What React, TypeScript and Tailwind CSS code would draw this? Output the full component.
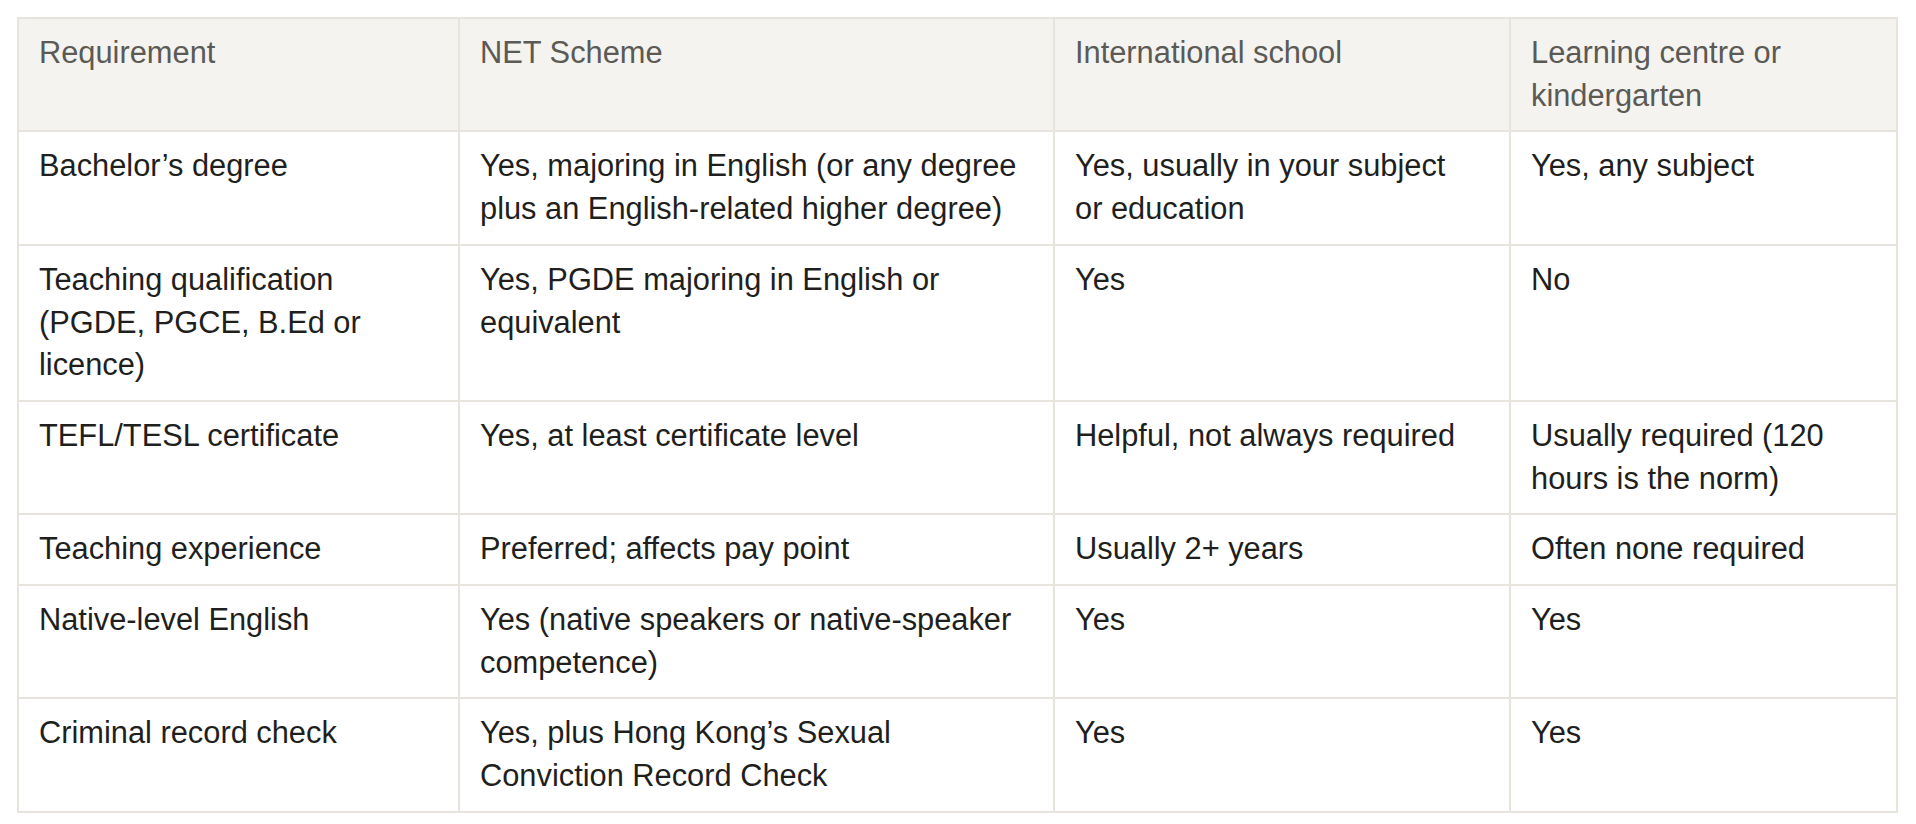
const rows: [string, string, string, string][] = [
  [
    "Bachelor’s degree",
    "Yes, majoring in English (or any degree plus an English-related higher degree)",
    "Yes, usually in your subject or education",
    "Yes, any subject",
  ],
  [
    "Teaching qualification (PGDE, PGCE, B.Ed or licence)",
    "Yes, PGDE majoring in English or equivalent",
    "Yes",
    "No",
  ],
  [
    "TEFL/TESL certificate",
    "Yes, at least certificate level",
    "Helpful, not always required",
    "Usually required (120 hours is the norm)",
  ],
  ["Teaching experience", "Preferred; affects pay point", "Usually 2+ years", "Often none required"],
  ["Native-level English", "Yes (native speakers or native-speaker competence)", "Yes", "Yes"],
  [
    "Criminal record check",
    "Yes, plus Hong Kong’s Sexual Conviction Record Check",
    "Yes",
    "Yes",
  ],
];

const headers = ["Requirement", "NET Scheme", "International school", "Learning centre or kindergarten"];

const pad = ["pr-[20px]", "pr-[20px]", "pr-[40px]", "pr-[20px]"];

export default function App() {
  return (
    <div className="bg-white pt-[17px] pb-[10px] pl-[17px] pr-[18px] font-['Liberation_Sans',Arial,sans-serif]">
      <table className="w-full table-fixed border-collapse border-2 border-[#e6e4dc] text-[30.8px] leading-[42.7px]">
        <colgroup>
          <col className="w-[441px]" />
          <col className="w-[595px]" />
          <col className="w-[456px]" />
          <col />
        </colgroup>
        <thead>
          <tr className="bg-[#f4f3ef]">
            {headers.map((h, i) => (
              <th
                key={h}
                className={`border-2 border-[#e6e4dc] pl-[20px] ${pad[i]} py-[13px] text-left align-top font-normal text-[#5b5a55]`}
              >
                {h}
              </th>
            ))}
          </tr>
        </thead>
        <tbody>
          {rows.map((r) => (
            <tr key={r[0]}>
              {r.map((c, i) => (
                <td
                  key={i}
                  className={`border-2 border-[#e6e4dc] pl-[20px] ${pad[i]} py-[13px] align-top text-[#1f1f1e]`}
                >
                  {c}
                </td>
              ))}
            </tr>
          ))}
        </tbody>
      </table>
    </div>
  );
}
